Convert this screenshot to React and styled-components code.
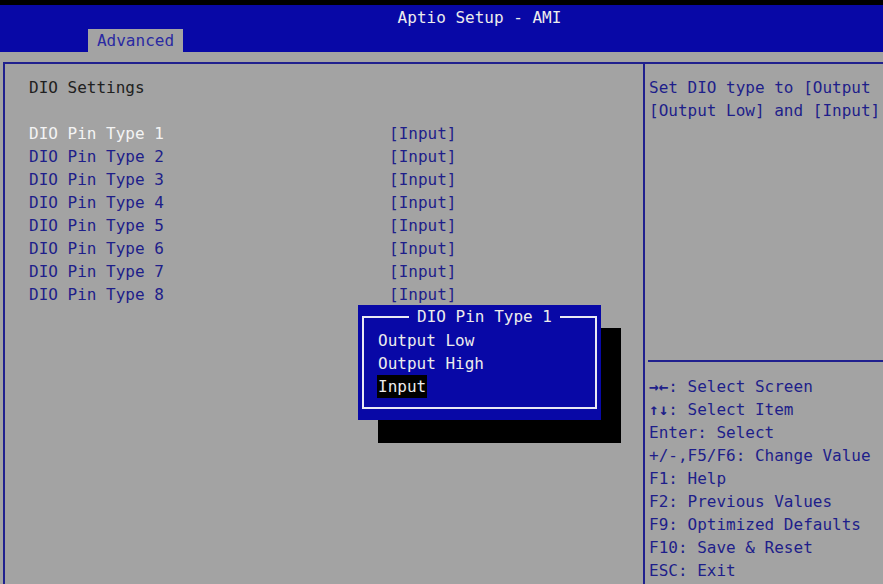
import React from "react";
import styled, { createGlobalStyle } from "styled-components";

const GRAY = "#a3a3a3";
const BLUE = "#0808a6";
const INK = "#1e1e8a";
const LIGHT = "#ececec";

const Global = createGlobalStyle`
  html, body { margin: 0; padding: 0; background: ${GRAY}; }
  body { font-family: "DejaVu Sans Mono", "Liberation Mono", monospace; font-size: 16px; }
`;

const Screen = styled.div`
  position: relative;
  width: 883px;
  height: 584px;
  overflow: hidden;
  background: ${GRAY};
  display: flex;
  flex-direction: column;
`;

const TopEdge = styled.div`
  height: 5px;
  background: #000;
`;

const Header = styled.header`
  height: 47px;
  background: ${BLUE};
  display: flex;
  flex-direction: column;
  justify-content: space-between;
`;

const Title = styled.div`
  color: ${LIGHT};
  text-align: center;
  line-height: 23px;
  padding-top: 1px;
  padding-left: 76px;
`;

const TabRow = styled.nav`
  display: flex;
  padding-left: 88px;
`;

const Tab = styled.div`
  width: 95px;
  height: 23px;
  line-height: 23px;
  background: ${GRAY};
  color: #2a2aa2;
  text-align: center;
`;

const Frame = styled.main`
  margin-top: 10px;
  margin-left: 3px;
  flex: 1;
  display: flex;
  border-top: 2px solid #20208e;
  border-left: 2px solid #20208e;
`;

const LeftPanel = styled.section`
  width: 640px;
  border-right: 2px solid #20208e;
  padding: 12px 0 0 24px;
  box-sizing: border-box;
`;

const Line = styled.div`
  height: 23px;
  line-height: 23px;
  white-space: pre;
  color: ${INK};
`;

const Heading = styled(Line)`
  color: #202020;
`;

const SettingRow = styled.div`
  display: grid;
  grid-template-columns: 360px auto;
  height: 23px;
  line-height: 23px;
  white-space: pre;
  color: ${INK};
`;

const Label = styled.span`
  color: ${(p) => (p.$selected ? "#f4f4f4" : INK)};
`;

const RightPanel = styled.aside`
  flex: 1;
  display: flex;
  flex-direction: column;
  overflow: hidden;
`;

const HelpTop = styled.div`
  height: 298px;
  padding: 12px 0 0 1px;
  box-sizing: border-box;
  border-bottom: 2px solid #20208e;
  margin-left: 3px;
  overflow: hidden;
`;

const Keys = styled.div`
  padding: 13px 0 0 4px;
`;

const Arrows = styled.span`
  font-weight: bold;
`;

const Popup = styled.div`
  position: absolute;
  left: 358px;
  top: 305px;
  width: 243px;
  height: 115px;
  background: ${BLUE};
  box-shadow: 20px 23px 0 #000;
  box-sizing: border-box;
  padding: 11px 4px;
`;

const PopupInner = styled.div`
  position: relative;
  height: 100%;
  border: 2px solid #e8e8f4;
  box-sizing: border-box;
  padding: 11px 0 0 14px;
`;

const PopupTitle = styled.div`
  position: absolute;
  top: -13px;
  left: 0;
  right: 0;
  display: flex;
  justify-content: center;
`;

const PopupTitleText = styled.span`
  background: ${BLUE};
  color: ${LIGHT};
  line-height: 23px;
  padding: 0 8px;
  margin-left: 10px;
`;

const Option = styled.div`
  height: 23px;
  line-height: 23px;
  display: flex;
`;

const OptionText = styled.span`
  color: ${LIGHT};
  background: ${(p) => (p.$active ? "#000" : "transparent")};
  padding: 0 1px;
  margin-left: -1px;
`;

const pins = [1, 2, 3, 4, 5, 6, 7, 8];
const keys = [
  ["→←", ": Select Screen"],
  ["↑↓", ": Select Item"],
  ["", "Enter: Select"],
  ["", "+/-,F5/F6: Change Value"],
  ["", "F1: Help"],
  ["", "F2: Previous Values"],
  ["", "F9: Optimized Defaults"],
  ["", "F10: Save & Reset"],
  ["", "ESC: Exit"],
];

export default function App() {
  return (
    <>
      <Global />
      <Screen>
        <TopEdge />
        <Header>
          <Title>Aptio Setup - AMI</Title>
          <TabRow>
            <Tab>Advanced</Tab>
          </TabRow>
        </Header>
        <Frame>
          <LeftPanel>
            <Heading>DIO Settings</Heading>
            <Line />
            {pins.map((n) => (
              <SettingRow key={n}>
                <Label $selected={n === 1}>DIO Pin Type {n}</Label>
                <span>[Input]</span>
              </SettingRow>
            ))}
          </LeftPanel>
          <RightPanel>
            <HelpTop>
              <Line>Set DIO type to [Output</Line>
              <Line>[Output Low] and [Input]</Line>
            </HelpTop>
            <Keys>
              {keys.map(([a, k]) => (
                <Line key={k}>
                  {a && <Arrows>{a}</Arrows>}
                  {k}
                </Line>
              ))}
            </Keys>
          </RightPanel>
        </Frame>
        <Popup>
          <PopupInner>
            <PopupTitle>
              <PopupTitleText>DIO Pin Type 1</PopupTitleText>
            </PopupTitle>
            <Option><OptionText>Output Low</OptionText></Option>
            <Option><OptionText>Output High</OptionText></Option>
            <Option><OptionText $active>Input</OptionText></Option>
          </PopupInner>
        </Popup>
      </Screen>
    </>
  );
}
